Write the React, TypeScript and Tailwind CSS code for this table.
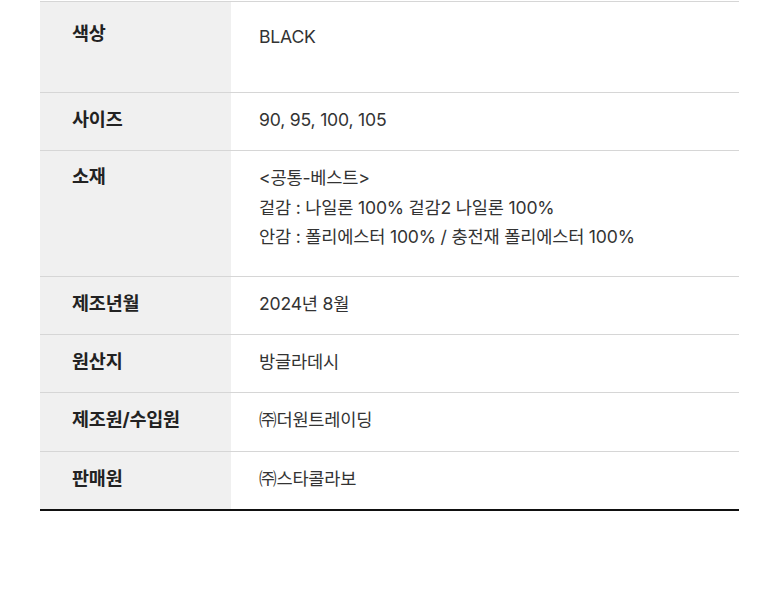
import React from 'react';

interface SpecRow {
  label: string;
  lines: string[];
  rowClass: string;
  labelClass: string;
  valueClass: string;
}

const rows: SpecRow[] = [
  { label: '색상', lines: ['BLACK'], rowClass: 'h-[91px]', labelClass: 'pt-[17px]', valueClass: 'pt-[20px]' },
  { label: '사이즈', lines: ['90, 95, 100, 105'], rowClass: 'h-[58px]', labelClass: 'pt-[12px]', valueClass: 'pt-[12px]' },
  {
    label: '소재',
    lines: ['<공통-베스트>', '겉감 : 나일론 100% 겉감2 나일론 100%', '안감 : 폴리에스터 100% / 충전재 폴리에스터 100%'],
    rowClass: 'h-[126px]',
    labelClass: 'pt-[11px]',
    valueClass: 'pt-[12px]',
  },
  { label: '제조년월', lines: ['2024년 8월'], rowClass: 'h-[58px]', labelClass: 'pt-[12px]', valueClass: 'pt-[12px]' },
  { label: '원산지', lines: ['방글라데시'], rowClass: 'h-[58px]', labelClass: 'pt-[12px]', valueClass: 'pt-[12px]' },
  { label: '제조원/수입원', lines: ['㈜더원트레이딩'], rowClass: 'h-[59px]', labelClass: 'pt-[12px]', valueClass: 'pt-[12px]' },
  { label: '판매원', lines: ['㈜스타콜라보'], rowClass: 'h-[57px]', labelClass: 'pt-[12px]', valueClass: 'pt-[12px]' },
];

const App: React.FC = () => {
  return (
    <div
      className="w-[780px] h-[596px] bg-white pt-px"
      style={{ fontFamily: 'Inter, "Noto Sans CJK KR", sans-serif' }}
    >
      <div className="mx-[40px] w-[699px] border-t border-[#d6d6d6] border-b-2 border-b-[#111111]">
        {rows.map((row, i) => (
          <div
            key={row.label}
            className={`flex ${row.rowClass} ${i < rows.length - 1 ? 'border-b border-[#d6d6d6]' : ''}`}
          >
            <div
              className={`w-[191px] shrink-0 bg-[#f0f0f0] pl-[32px] text-[18.5px] font-bold leading-[29px] tracking-[-0.2px] text-[#222222] ${row.labelClass}`}
            >
              {row.label}
            </div>
            <div className={`pl-[28px] text-[17.6px] leading-[29.5px] tracking-[-0.2px] text-[#333333] ${row.valueClass}`}>
              {row.lines.map((line) => (
                <p key={line}>{line}</p>
              ))}
            </div>
          </div>
        ))}
      </div>
    </div>
  );
};

export default App;
